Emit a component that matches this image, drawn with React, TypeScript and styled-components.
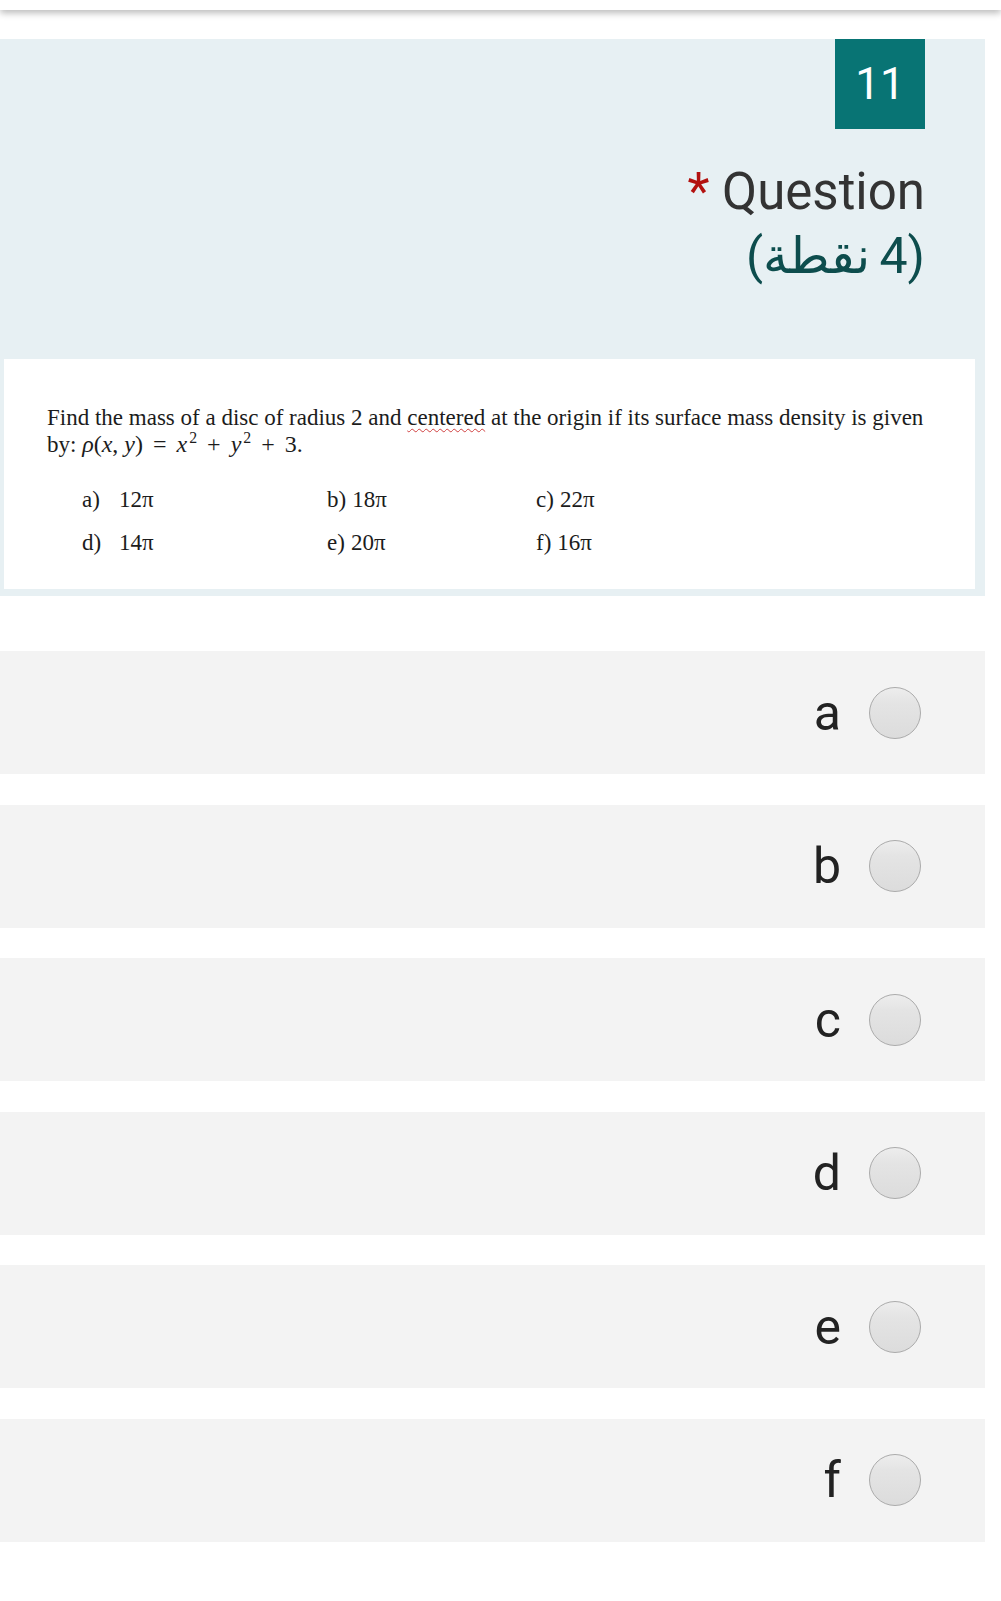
import styled, { createGlobalStyle } from "styled-components";

const options = [
  { key: "a", text: "12π", wide: true },
  { key: "b", text: "18π", wide: false },
  { key: "c", text: "22π", wide: false },
  { key: "d", text: "14π", wide: true },
  { key: "e", text: "20π", wide: false },
  { key: "f", text: "16π", wide: false },
];

const answers = ["a", "b", "c", "d", "e", "f"];

export default function App() {
  return (
    <>
      <GlobalStyle />
      <TopBar />
      <Page>
        <QuestionPanel>
          <Header>
            <NumberBadge>11</NumberBadge>
            <Title>
              <TitleLine>
                <Required>*</Required> Question
              </TitleLine>
              <Points dir="rtl">
                (4 <ArabicWord>نقطة</ArabicWord>)
              </Points>
            </Title>
          </Header>
          <Card>
            <Prompt>
              Find the mass of a disc of radius 2 and <Misspelled>centered</Misspelled> at the origin if its
              surface mass density is given
              <br />
              by:{" "}
              <MathText>
                <Var>ρ</Var>(<Var>x</Var>, <Var>y</Var>) <Op>=</Op> <Var>x</Var>
                <sup>2</sup> <Op>+</Op> <Var>y</Var>
                <sup>2</sup> <Op>+</Op> 3.
              </MathText>
            </Prompt>
            <OptionGrid>
              {options.map((o) => (
                <Option key={o.key}>
                  <OptionKey $wide={o.wide}>{o.key})</OptionKey>
                  {o.text}
                </Option>
              ))}
            </OptionGrid>
          </Card>
        </QuestionPanel>
        <AnswerList>
          {answers.map((a) => (
            <AnswerRow key={a}>
              <AnswerLabel>{a}</AnswerLabel>
              <Radio />
            </AnswerRow>
          ))}
        </AnswerList>
      </Page>
    </>
  );
}

const GlobalStyle = createGlobalStyle`
  body {
    margin: 0;
    background: #ffffff;
    font-family: Roboto, "Noto Sans", sans-serif;
  }
`;

const TopBar = styled.div`
  height: 10px;
  background: #ffffff;
  box-shadow: 0 3px 7px rgba(0, 0, 0, 0.28);
  position: relative;
  z-index: 1;
`;

const Page = styled.main`
  width: 985px;
  padding-top: 29px;
`;

const QuestionPanel = styled.section`
  background: #e7f0f3;
  padding: 0 10px 7px 4px;
`;

const Header = styled.header`
  display: flex;
  flex-direction: column;
  align-items: flex-end;
  padding-right: 50px;
`;

const NumberBadge = styled.div`
  width: 90px;
  height: 90px;
  display: grid;
  place-items: center;
  background: #087474;
  color: #ffffff;
  font-size: 44px;
`;

const Title = styled.h2`
  margin: 30px 0 0;
  text-align: right;
  font-weight: 400;
  font-size: 51px;
  line-height: 65px;
`;

const TitleLine = styled.div`
  color: #333333;
`;

const Required = styled.span`
  color: #b3110f;
`;

const Points = styled.div`
  color: #0d4d4d;
  font-size: 50px;
`;

const ArabicWord = styled.span`
  font-family: "DejaVu Sans", sans-serif;
  margin-right: -3px;
`;

const Card = styled.div`
  margin-top: 70px;
  background: #ffffff;
  padding: 46px 30px 33px 43px;
  font-family: "Liberation Serif", "Times New Roman", serif;
  color: #1c1c1c;
`;

const Prompt = styled.p`
  margin: 0;
  font-size: 23px;
  line-height: 26px;
  white-space: nowrap;
`;

const Misspelled = styled.span`
  text-decoration: underline wavy #d04040;
  text-decoration-thickness: 1px;
  text-underline-offset: 3px;
`;

const MathText = styled.span`
  font-size: 24px;

  sup {
    font-size: 0.66em;
    line-height: 0;
    vertical-align: 0.55em;
    margin-left: 2px;
  }
`;

const Var = styled.i`
  font-style: italic;
`;

const Op = styled.span`
  padding: 0 4px;
`;

const OptionGrid = styled.div`
  display: grid;
  grid-template-columns: 245px 209px auto;
  row-gap: 17px;
  margin: 29px 0 0 35px;
  font-size: 23px;
  line-height: 26px;
`;

const Option = styled.div`
  white-space: nowrap;
`;

const OptionKey = styled.span<{ $wide: boolean }>`
  display: inline-block;
  min-width: ${({ $wide }) => ($wide ? "37px" : "0")};
  margin-right: ${({ $wide }) => ($wide ? "0" : "6px")};
`;

const AnswerList = styled.div`
  margin-top: 55px;
  display: flex;
  flex-direction: column;
  gap: 30.5px;
`;

const AnswerRow = styled.label`
  height: 123px;
  display: flex;
  align-items: center;
  justify-content: flex-end;
  gap: 28px;
  padding-right: 64px;
  background: #f3f3f3;
`;

const AnswerLabel = styled.span`
  font-size: 50px;
  color: #222222;
  line-height: 1;
`;

const Radio = styled.span`
  width: 50px;
  height: 50px;
  border-radius: 50%;
  border: 1px solid #ababab;
  background: linear-gradient(#ededed 0%, #e4e4e4 30%, #dcdcdc 100%);
  box-sizing: content-box;
`;
